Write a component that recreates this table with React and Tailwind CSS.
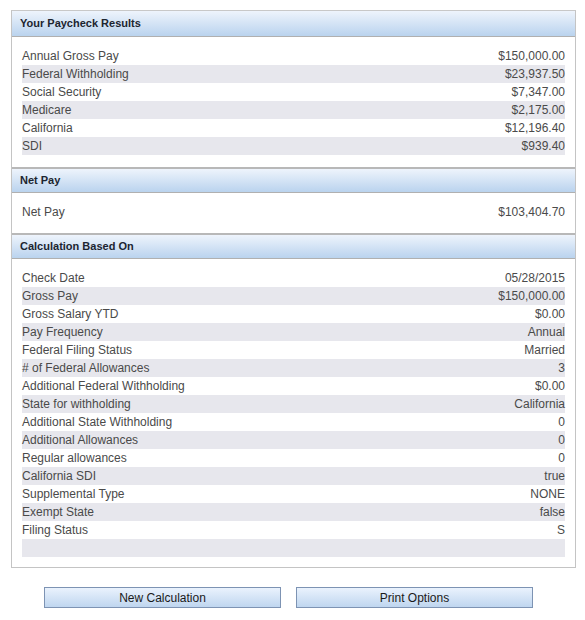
import React from "react";

const results = [
  ["Annual Gross Pay", "$150,000.00"],
  ["Federal Withholding", "$23,937.50"],
  ["Social Security", "$7,347.00"],
  ["Medicare", "$2,175.00"],
  ["California", "$12,196.40"],
  ["SDI", "$939.40"],
];

const calc = [
  ["Check Date", "05/28/2015"],
  ["Gross Pay", "$150,000.00"],
  ["Gross Salary YTD", "$0.00"],
  ["Pay Frequency", "Annual"],
  ["Federal Filing Status", "Married"],
  ["# of Federal Allowances", "3"],
  ["Additional Federal Withholding", "$0.00"],
  ["State for withholding", "California"],
  ["Additional State Withholding", "0"],
  ["Additional Allowances", "0"],
  ["Regular allowances", "0"],
  ["California SDI", "true"],
  ["Supplemental Type", "NONE"],
  ["Exempt State", "false"],
  ["Filing Status", "S"],
  ["", ""],
];

function Header({ title, first }) {
  return (
    <div
      className={`h-[26px] flex items-center px-[8px] bg-gradient-to-b from-[#eef4fc] to-[#bad3ee] border-b border-[#b0b0b0] text-[11px] font-bold text-[#1c2530] ${
        first ? "" : "border-t-2 border-t-[#b8b8b8]"
      }`}
    >
      {title}
    </div>
  );
}

function Rows({ rows, last }) {
  return (
    <div className={`px-[10px] pt-[10px] ${last ? "pb-[10px]" : "pb-[12px]"}`}>
      {rows.map(([k, v], i) => (
        <div
          key={i}
          className={`h-[18px] flex items-center justify-between text-[12px] text-[#4a4a4a] ${
            i % 2 === 1 ? "bg-[#e7e7ed]" : ""
          }`}
        >
          <span>{k}</span>
          <span>{v}</span>
        </div>
      ))}
    </div>
  );
}

function Button({ children }) {
  return (
    <button className="w-[237px] h-[21px] border border-[#7d93b3] bg-gradient-to-b from-[#eaf2fd] to-[#bfd6ef] text-[12px] text-[#1a1a1a] flex items-center justify-center">
      {children}
    </button>
  );
}

export default function App() {
  return (
    <div className="bg-white w-[585px] h-[620px] pt-[10px] pl-[11px]" style={{ fontFamily: '"Liberation Sans", Arial, sans-serif' }}>
      <div className="w-[565px] border border-[#c4c4c4] border-t-[#c8c8c8]">
        <Header title="Your Paycheck Results" first />
        <Rows rows={results} />
        <Header title="Net Pay" />
        <Rows rows={[["Net Pay", "$103,404.70"]]} />
        <Header title="Calculation Based On" />
        <Rows rows={calc} last />
      </div>
      <div className="flex gap-[15px] pl-[33px] mt-[19px]">
        <Button>New Calculation</Button>
        <Button>Print Options</Button>
      </div>
    </div>
  );
}
